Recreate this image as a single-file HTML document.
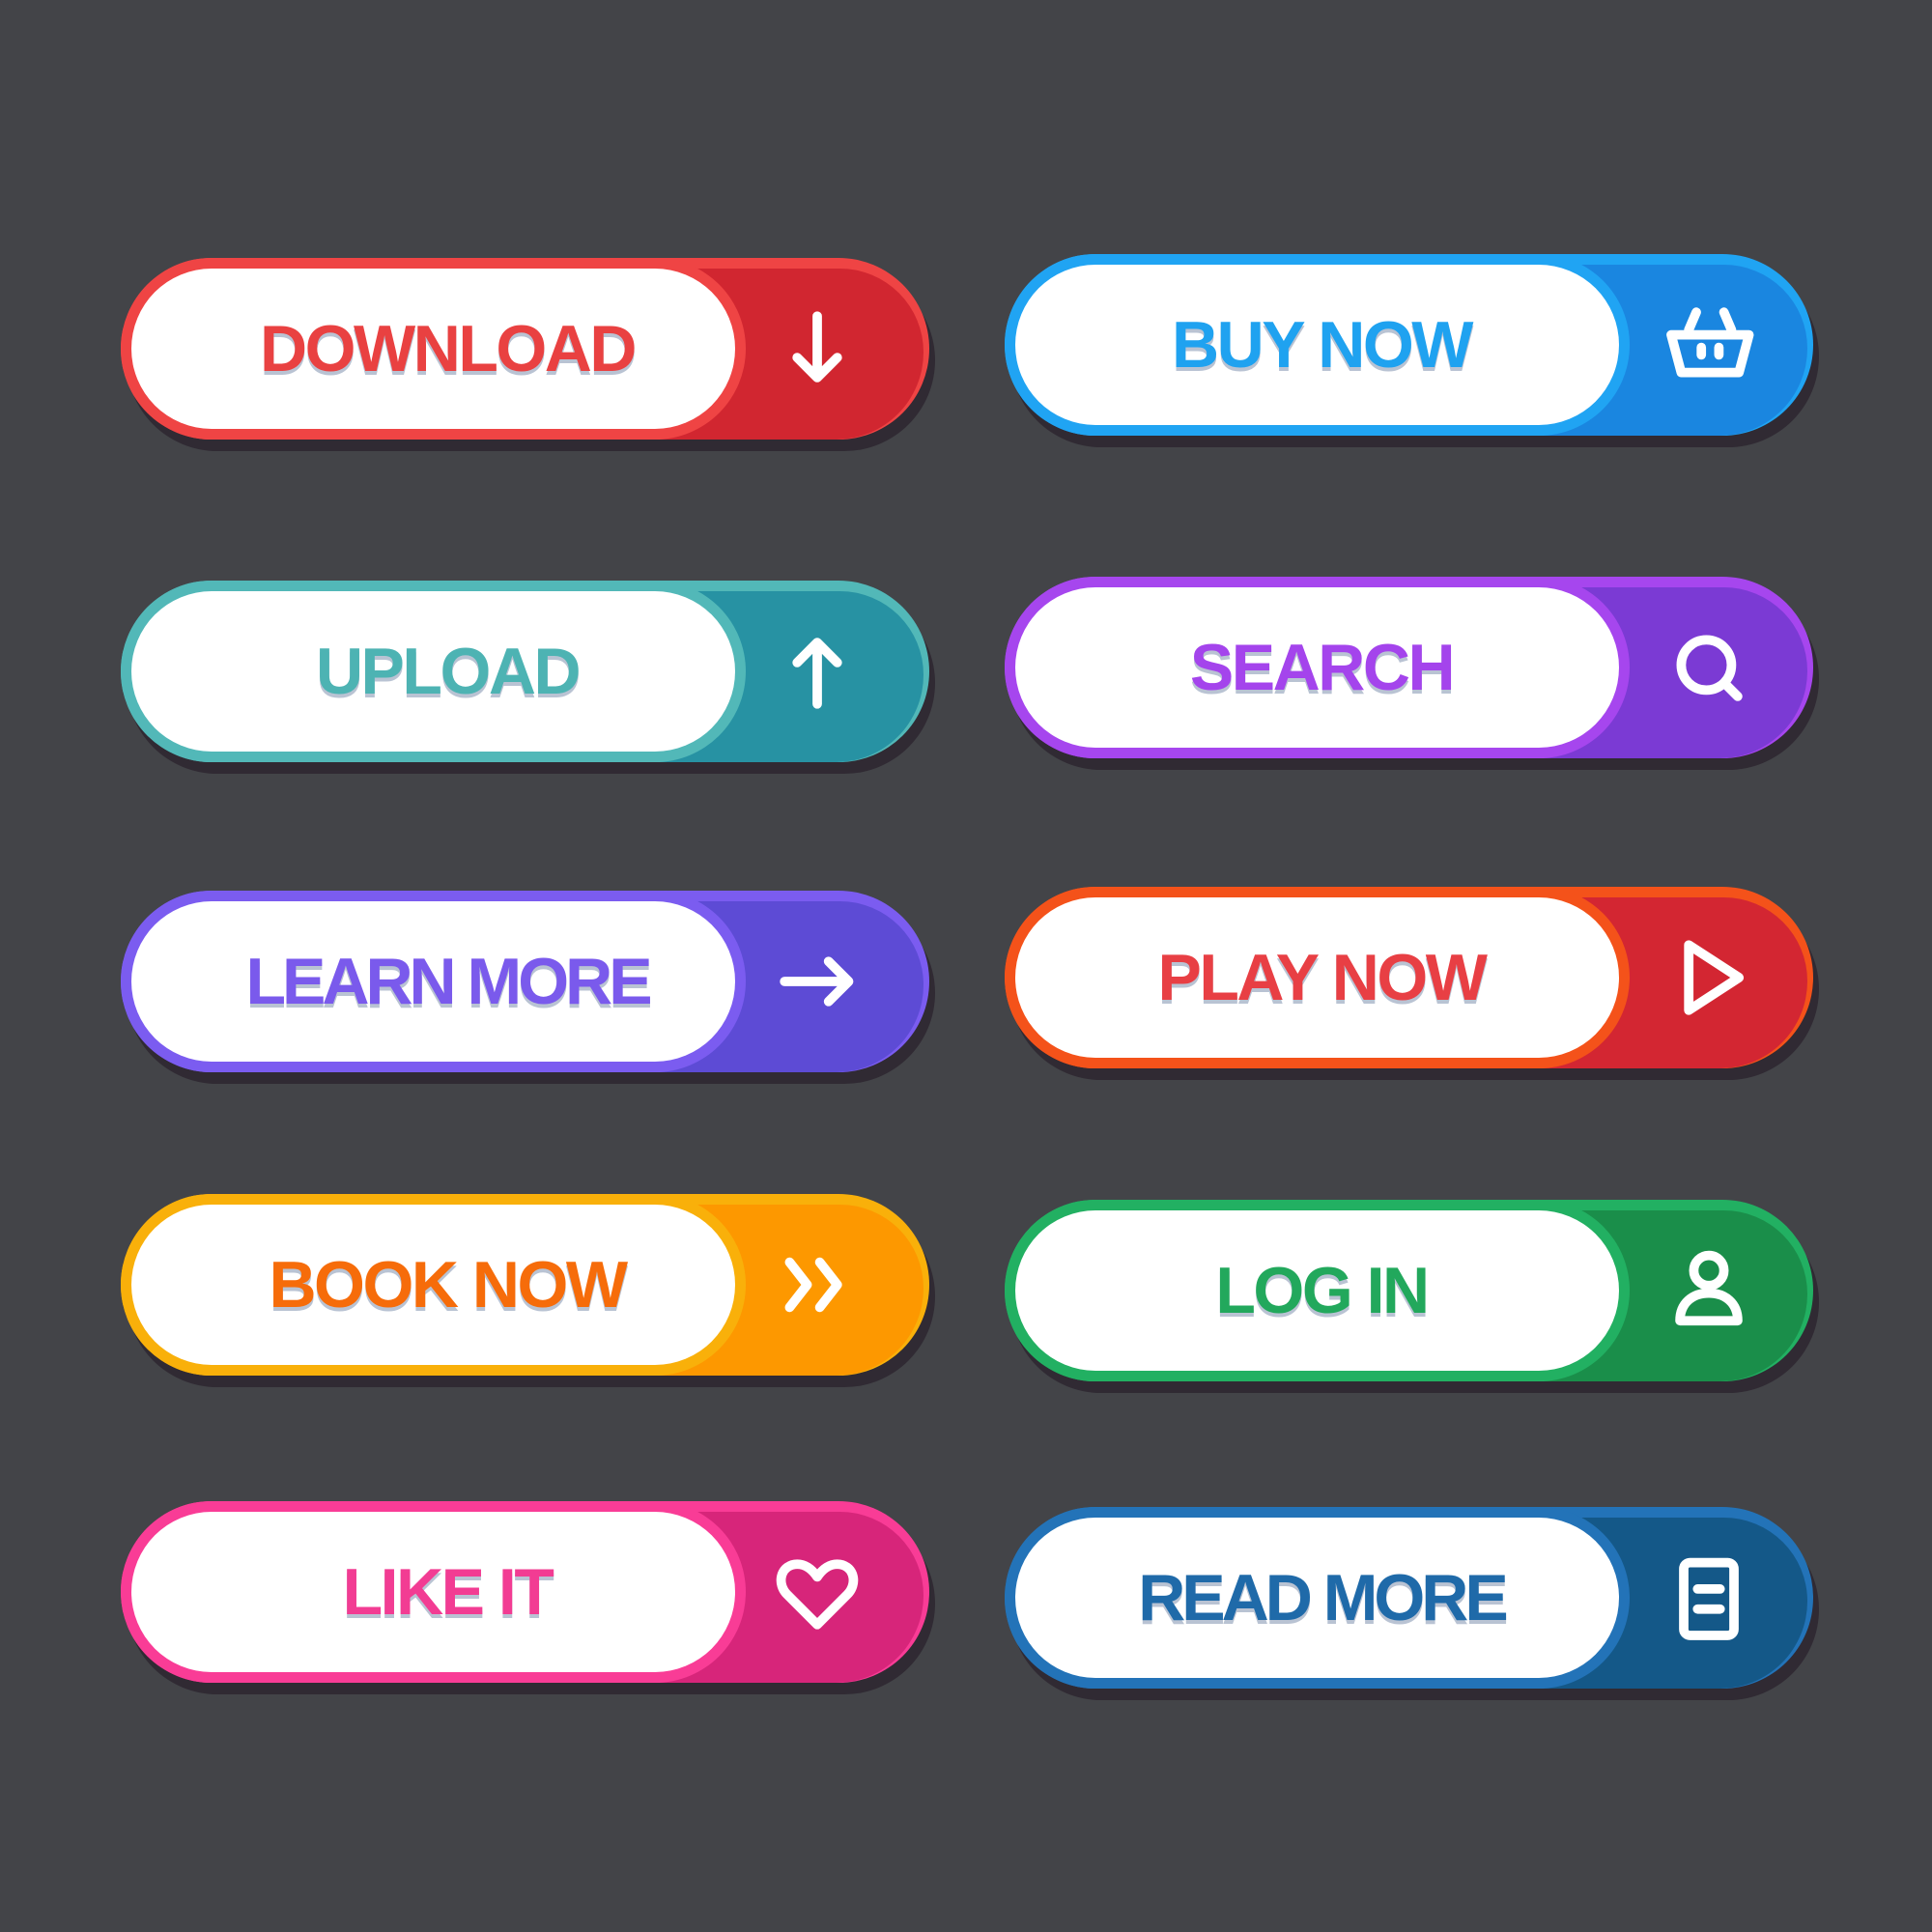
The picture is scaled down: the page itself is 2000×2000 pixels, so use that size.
<!DOCTYPE html>
<html><head><meta charset="utf-8"><style>
body{margin:0;width:2000px;height:2000px;background:#434448;position:relative;overflow:hidden;font-family:"Liberation Sans",sans-serif}
.b{position:absolute;width:837px;height:188px}
.b>div{position:absolute;border-radius:100px}
.sh{left:6px;top:12px;width:837px;height:188px;background:#302a33}
.ou{left:0;top:0;width:837px;height:188px}
.dk{left:480px;top:11px;width:351px;height:177px;border-radius:0 90px 94px 0!important}
.rg{left:0;top:0;width:647px;height:188px}
.wh{left:11px;top:11px;width:625px;height:166px;background:#fff}
.t{position:absolute;left:0;width:676px;top:0;height:188px;line-height:188px;text-align:center;font-weight:bold;font-size:68px;letter-spacing:-2.5px;text-shadow:0 4px 0 #b9c3d3}
.r .t{left:-10px}
.b svg{position:absolute;left:669px;top:42px;width:104px;height:104px;overflow:visible}
.r svg{left:677px}
.b svg *{fill:none;stroke:#fff;stroke-width:7.5;stroke-linecap:round;stroke-linejoin:round}
</style></head><body>

<div class="b" style="left:125px;top:267px"><div class="sh"></div><div class="ou" style="background:#ef4444"></div><div class="dk" style="background:#d12630"></div><div class="rg" style="background:#ef4444"></div><div class="wh"></div><span class="t" style="color:#e94141">DOWNLOAD</span>
<svg viewBox="0 0 80 80"><path d="M40 14V62M24 47L40 63L56 47"/></svg></div>

<div class="b" style="left:125px;top:601px"><div class="sh"></div><div class="ou" style="background:#52b8b8"></div><div class="dk" style="background:#2792a3"></div><div class="rg" style="background:#52b8b8"></div><div class="wh"></div><span class="t" style="color:#4db3b3">UPLOAD</span>
<svg viewBox="0 0 80 80"><path d="M40 66V18M24 33L40 17L56 33"/></svg></div>

<div class="b" style="left:125px;top:922px"><div class="sh"></div><div class="ou" style="background:#7b5cf0"></div><div class="dk" style="background:#5d4bd5"></div><div class="rg" style="background:#7b5cf0"></div><div class="wh"></div><span class="t" style="color:#7a5aec;letter-spacing:-4px">LEARN MORE</span>
<svg viewBox="0 0 80 80"><path d="M14 40H64M49 24L65 40L49 56"/></svg></div>

<div class="b" style="left:125px;top:1236px"><div class="sh"></div><div class="ou" style="background:#f9b00a"></div><div class="dk" style="background:#fd9800"></div><div class="rg" style="background:#f9b00a"></div><div class="wh"></div><span class="t" style="color:#f66c0a">BOOK NOW</span>
<svg viewBox="0 0 80 80"><path d="M18 22L32 40L18 58M42 22L56 40L42 58"/></svg></div>

<div class="b" style="left:125px;top:1554px"><div class="sh"></div><div class="ou" style="background:#f93c96"></div><div class="dk" style="background:#d7257a"></div><div class="rg" style="background:#f93c96"></div><div class="wh"></div><span class="t" style="color:#f23c93">LIKE IT</span>
<svg viewBox="0 0 80 80"><path d="M40 66L16 42C8 34 10 20 22 18C30 17 36 22 40 28C44 22 50 17 58 18C70 20 72 34 64 42Z"/></svg></div>

<div class="b r" style="left:1040px;top:263px"><div class="sh"></div><div class="ou" style="background:#20a4f3"></div><div class="dk" style="background:#1a86e0"></div><div class="rg" style="background:#20a4f3"></div><div class="wh"></div><span class="t" style="color:#1fa2f0">BUY NOW</span>
<svg viewBox="0 0 80 80"><path d="M30 14L24 28M52 14L58 28M10 32H72L64 62H18Z M34 42V48M48 42V48"/></svg></div>

<div class="b r" style="left:1040px;top:597px"><div class="sh"></div><div class="ou" style="background:#a646ee"></div><div class="dk" style="background:#7b3ad4"></div><div class="rg" style="background:#a646ee"></div><div class="wh"></div><span class="t" style="color:#a444ec">SEARCH</span>
<svg viewBox="0 0 80 80"><circle cx="38" cy="38" r="20"/><path d="M53 53L63 63"/></svg></div>

<div class="b r" style="left:1040px;top:918px"><div class="sh"></div><div class="ou" style="background:#f4521a"></div><div class="dk" style="background:#d32632"></div><div class="rg" style="background:#f4521a"></div><div class="wh"></div><span class="t" style="color:#e83f44">PLAY NOW</span>
<svg viewBox="0 0 80 80"><path d="M24 14L64 40L24 66Z"/></svg></div>

<div class="b r" style="left:1040px;top:1242px"><div class="sh"></div><div class="ou" style="background:#22b062"></div><div class="dk" style="background:#1a8e4a"></div><div class="rg" style="background:#22b062"></div><div class="wh"></div><span class="t" style="color:#22a85c">LOG IN</span>
<svg viewBox="0 0 80 80"><circle cx="40" cy="24" r="12"/><path d="M17 64C17 50 27 42 40 42C53 42 63 50 63 64Z"/></svg></div>

<div class="b r" style="left:1040px;top:1560px"><div class="sh"></div><div class="ou" style="background:#2373b8"></div><div class="dk" style="background:#145888"></div><div class="rg" style="background:#2373b8"></div><div class="wh"></div><span class="t" style="color:#1f6aa9;letter-spacing:-4px">READ MORE</span>
<svg viewBox="0 0 80 80"><rect x="20" y="12" width="40" height="58" rx="5"/><path d="M31 33H49M31 49H49"/></svg></div>

</body></html>
